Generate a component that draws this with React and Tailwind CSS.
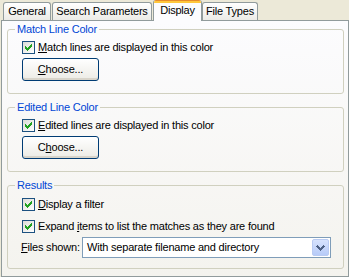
import React from 'react'

const CHECK_PIXELS = [
  [6, 0, 1], [5, 1, 2], [0, 2, 1], [4, 2, 3], [0, 3, 2], [3, 3, 3], [0, 4, 5], [1, 5, 3], [2, 6, 1],
]

function CheckBox({ children }) {
  return (
    <div className="flex h-[13px] items-center">
      <span className="h-[13px] w-[13px] shrink-0 border border-[#1c5180] bg-linear-to-br from-[#dcdcd7] to-white">
        <svg width="11" height="11" viewBox="0 0 11 11" shapeRendering="crispEdges">
          {CHECK_PIXELS.map(([x, y, w]) => (
            <rect key={`${x}-${y}`} x={x + 2} y={y + 2} width={w} height="1" fill="#21a121" />
          ))}
        </svg>
      </span>
      <span className="ml-[3px] whitespace-nowrap">{children}</span>
    </div>
  )
}

function ChooseButton({ children }) {
  return (
    <button className="mt-[4px] flex h-[23px] w-[77px] items-center justify-center rounded-[3px] border border-[#003c74] bg-linear-to-b from-white to-[#ecebe5] shadow-[inset_0_-2px_0_#d8d4ca]">
      {children}
    </button>
  )
}

function GroupBox({ title, className = '', children }) {
  return (
    <fieldset className={`w-[337px] rounded-[3px] border border-[#d0d0bf] ${className}`}>
      <legend className="ml-[7px] px-[2px] text-[#0046d5]">{title}</legend>
      <div className="pl-[14px]">{children}</div>
    </fieldset>
  )
}

function Tab({ className = '', children }) {
  return (
    <div
      className={`flex h-[18px] items-center justify-center rounded-t-[3px] border-x border-t border-[#919b9c] bg-linear-to-b from-white to-[#ecebe6] whitespace-nowrap ${className}`}
    >
      {children}
    </div>
  )
}

function ActiveTab({ className = '', children }) {
  return (
    <div
      className={`relative z-10 mb-[-1px] flex h-[21px] flex-col overflow-hidden rounded-t-[3px] border-x border-[#919b9c] bg-[#fcfcfe] ${className}`}
    >
      <div className="h-[1px] bg-[#e68b2c]" />
      <div className="h-[2px] bg-[#ffc73c]" />
      <div className="flex flex-1 items-center justify-center pb-[3px]">{children}</div>
    </div>
  )
}

export default function App() {
  return (
    <div className="h-[277px] w-[349px] overflow-hidden bg-[#ece9d8] font-['Liberation_Sans',Arial,sans-serif] text-[11px] leading-[13px] tracking-[-0.2px] text-black">
      <div className="flex h-[20px] items-end">
        <Tab className="ml-[3px] w-[48px]">General</Tab>
        <Tab className="ml-[1px] w-[100px]">Search Parameters</Tab>
        <ActiveTab className="ml-[1px] w-[49px]">Display</ActiveTab>
        <Tab className="w-[56px]">File Types</Tab>
      </div>

      <div className="ml-[1px] h-[257px] w-[348px] border border-[#919b9c] bg-linear-to-b from-[#fcfcfe] to-[#f4f3ee] pl-[5px] pt-[2px]">
        <GroupBox title="Match Line Color" className="pb-[12px]">
          <div className="mt-[5px]">
            <CheckBox>
              <span className="underline">M</span>atch lines are displayed in this color
            </CheckBox>
          </div>
          <ChooseButton>
            <span className="underline">C</span>hoose...
          </ChooseButton>
        </GroupBox>

        <GroupBox title="Edited Line Color" className="mt-[7px] pb-[12px]">
          <div className="mt-[5px]">
            <CheckBox>
              <span className="underline">E</span>dited lines are displayed in this color
            </CheckBox>
          </div>
          <ChooseButton>
            C<span className="underline">h</span>oose...
          </ChooseButton>
        </GroupBox>

        <GroupBox title="Results" className="mt-[7px] pb-[10px]">
          <div className="mt-[6px]">
            <CheckBox>
              <span className="underline">D</span>isplay a filter
            </CheckBox>
          </div>
          <div className="mt-[9px]">
            <CheckBox>
              Expand <span className="underline">i</span>tems to list the matches as they are found
            </CheckBox>
          </div>
          <div className="mt-[4px] flex items-center">
            <span className="ml-[-1px] w-[61px] whitespace-nowrap">
              <span className="underline">F</span>iles shown:
            </span>
            <div className="flex h-[21px] w-[249px] items-center border border-[#7f9db9] bg-white">
              <span className="flex-1 whitespace-nowrap pl-[4px]">With separate filename and directory</span>
              <span className="mr-[1px] flex h-[17px] w-[17px] items-center justify-center rounded-[2px] border border-[#b9cbf3] bg-linear-to-b from-[#d6e2fd] to-[#b7cbf8]">
                <svg width="9" height="6" viewBox="0 0 9 6" shapeRendering="crispEdges">
                  <path d="M1 1 L4.5 4.5 L8 1" fill="none" stroke="#4d6185" strokeWidth="2" />
                </svg>
              </span>
            </div>
          </div>
        </GroupBox>
      </div>
    </div>
  )
}
